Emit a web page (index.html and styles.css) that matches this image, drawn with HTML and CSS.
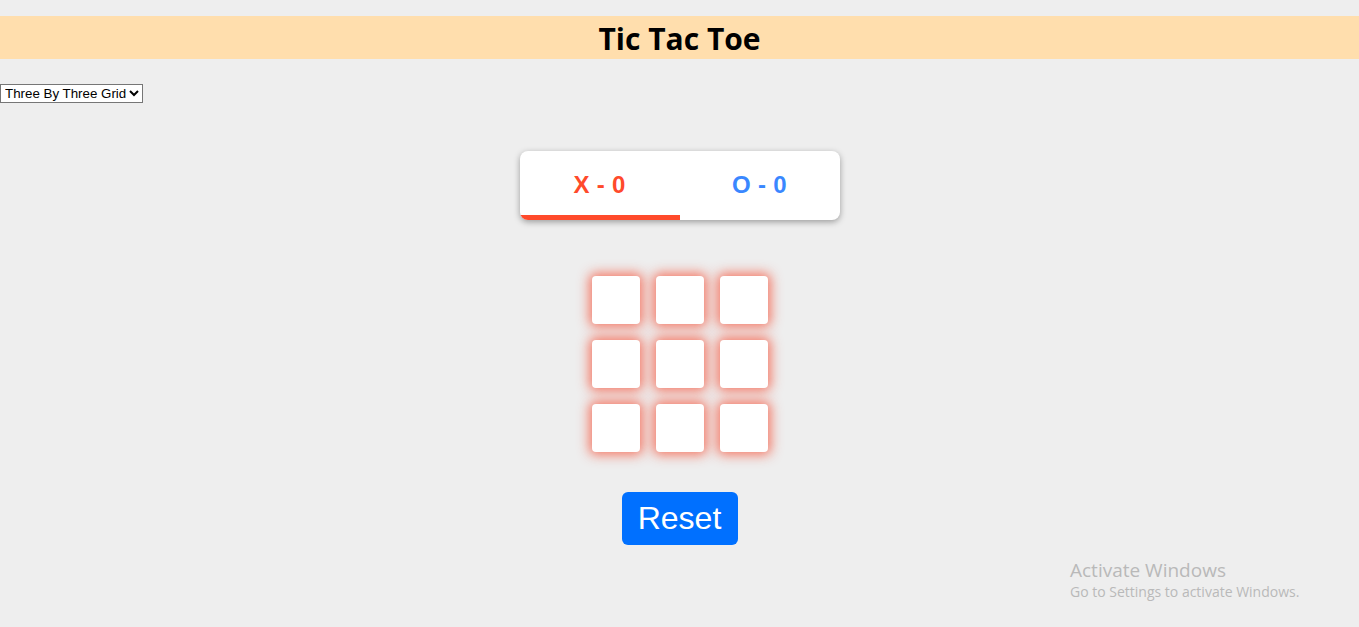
FILE: index.html
```html
<!DOCTYPE html>
<html>
<head>
<meta charset="utf-8">
<title>Tic Tac Toe</title>
<link rel="stylesheet" href="styles.css">
</head>
<body>
<h1 class="title">Tic Tac Toe</h1>
<div class="controls">
  <select class="grid-select">
    <option>Three By Three Grid</option>
    <option>Four By Four Grid</option>
  </select>
</div>
<main class="game">
  <div class="score">
    <div class="score-item score-x active">X - 0</div>
    <div class="score-item score-o">O - 0</div>
  </div>
  <div class="board">
    <div class="cell"></div><div class="cell"></div><div class="cell"></div>
    <div class="cell"></div><div class="cell"></div><div class="cell"></div>
    <div class="cell"></div><div class="cell"></div><div class="cell"></div>
  </div>
  <button class="reset">Reset</button>
</main>
<div class="watermark">
  <div class="wm-title">Activate Windows</div>
  <div class="wm-sub">Go to Settings to activate Windows.</div>
</div>
</body>
</html>
```
FILE: styles.css
```css
html, body {
  margin: 0;
  padding: 0;
  background: #eeeeee;
  height: 100%;
}
body {
  font-family: "Liberation Sans", Arial, sans-serif;
  overflow: hidden;
}
.title {
  margin: 16px 0 0;
  height: 43px;
  line-height: 46px;
  background: #ffdead;
  text-align: center;
  font-family: "Open Sans", "Noto Sans", sans-serif;
  font-weight: 700;
  font-size: 30px;
  color: #000;
}
.controls {
  margin-top: 25px;
  height: 18px;
}
.grid-select {
  margin: 0;
  font-family: "Liberation Sans", Arial, sans-serif;
  font-size: 13.33px;
  height: 19px;
  width: 143px;
  padding: 0;
  border: 1px solid #767676;
  background: #fff;
  color: #000;
  border-radius: 0;
}
.game {
  display: flex;
  flex-direction: column;
  align-items: center;
  margin-top: 49px;
}
.score {
  width: 320px;
  height: 69px;
  background: #fff;
  border-radius: 8px;
  box-shadow: 0 2px 6px rgba(0,0,0,0.35);
  display: flex;
  overflow: hidden;
}
.score-item {
  flex: 1;
  display: flex;
  align-items: center;
  justify-content: center;
  font-family: "Liberation Sans", Arial, sans-serif;
  font-weight: 700;
  font-size: 24px;
  letter-spacing: 0.3px;
  border-bottom: 5px solid transparent;
  padding-top: 4px;
}
.score-x { color: #ff4a2b; }
.score-o { color: #3a87ff; }
.score-item.active { border-bottom-color: #ff4a2b; }
.board {
  margin-top: 56px;
  display: grid;
  grid-template-columns: repeat(3, 48px);
  grid-auto-rows: 48px;
  gap: 16px;
}
.cell {
  background: #fff;
  border-radius: 4px;
  box-shadow: 0 0 12px 3px rgba(244, 100, 78, 0.85);
}
.reset {
  margin-top: 40px;
  width: 116px;
  height: 53px;
  border: none;
  border-radius: 6px;
  background: #0070ff;
  color: #fff;
  font-family: "Liberation Sans", Arial, sans-serif;
  font-size: 32px;
  padding: 0;
  cursor: pointer;
}
.watermark {
  position: absolute;
  left: 1070px;
  top: 558px;
  color: #b9b9b9;
  font-family: "Open Sans", "Noto Sans", sans-serif;
}
.wm-title {
  font-size: 19px;
  line-height: 24px;
}
.wm-sub {
  font-size: 14px;
  line-height: 20px;
}
```
